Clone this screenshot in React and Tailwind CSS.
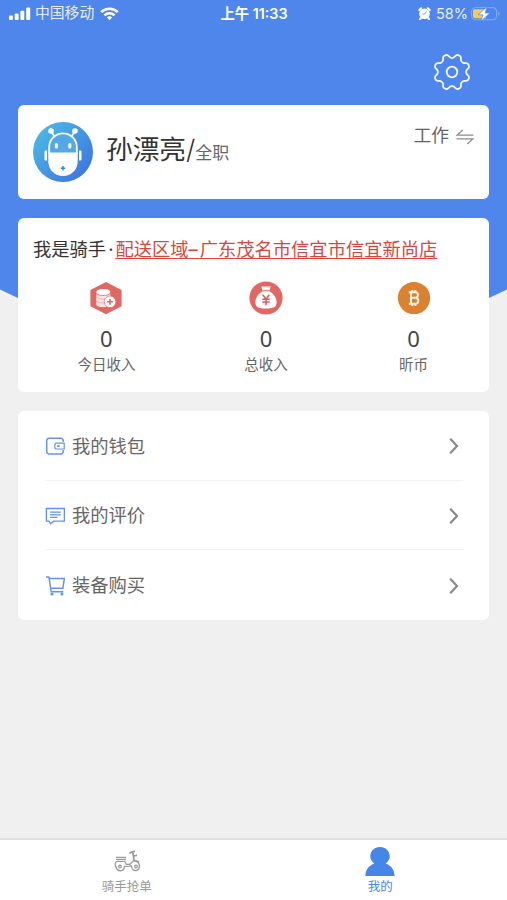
import React from 'react';

const Signal = () => (
  <svg className="w-[22px] h-[14px]" viewBox="0 0 22 14" fill="white">
    <rect x="0" y="8.6" width="3.9" height="4.4" rx="1" />
    <rect x="5.7" y="6.6" width="3.9" height="6.4" rx="1" />
    <rect x="11.4" y="3.8" width="3.9" height="9.2" rx="1" />
    <rect x="17.2" y="0.6" width="4" height="12.4" rx="1" />
  </svg>
);

const Wifi = () => (
  <svg className="w-[19px] h-[14px]" viewBox="0 0 19 14" fill="none" stroke="white" strokeWidth="2.5">
    <path d="M1.2 5.1a11.8 11.8 0 0 1 16.6 0" />
    <path d="M4.4 8.3a7.2 7.2 0 0 1 10.2 0" />
    <path d="M9.5 13.2 6.9 10.5a3.7 3.7 0 0 1 5.2 0z" fill="white" stroke="none" />
  </svg>
);

const Alarm = () => (
  <svg className="w-[13px] h-[13px]" viewBox="0 0 13 13" fill="none">
    <circle cx="6.5" cy="6.8" r="5.3" fill="white" />
    <path d="M1.3 3 3.2 1.3M11.7 3 9.8 1.3M2.8 11.2l-.8 1M10.2 11.2l.8 1" stroke="white" strokeWidth="2.1" strokeLinecap="round" />
    <path d="M8.5 4.6 6.6 7H4.6" stroke="#4f86ec" strokeWidth="0.8" />
  </svg>
);

const Battery = () => (
  <svg className="w-[30px] h-[16px]" viewBox="0 0 30 16" fill="none">
    <rect x="0.6" y="1.6" width="25" height="12.2" rx="3.6" stroke="#86adf3" strokeWidth="1" />
    <path d="M27.3 5.6c1.8.8 1.8 3.6 0 4.4z" fill="#86adf3" />
    <path d="M4 3.2h11v9H4a2 2 0 0 1-2-2v-5a2 2 0 0 1 2-2z" fill="#f5ce46" />
    <path d="M16.2.8 7 8.8h5l-2.200 6.4 9.200-8.200h-5z" fill="white" stroke="#4f86ec" strokeWidth="0.7" />
  </svg>
);

// Outline with eight rounded teeth
const gearPoints = Array.from({ length: 144 }, (_, i) => {
  const a = (i / 144) * Math.PI * 2;
  const r = 16.1 - (1.9 * Math.tanh(1.5 * Math.cos(8 * a))) / Math.tanh(1.5);
  return `${(19 + r * Math.cos(a)).toFixed(2)},${(19 + r * Math.sin(a)).toFixed(2)}`;
}).join(' ');

const Gear = () => (
  <svg className="w-[38px] h-[38px]" viewBox="0 0 38 38" fill="none" stroke="#f4f8ff" strokeWidth="1.8" strokeLinejoin="round">
    <polygon points={gearPoints} />
    <circle cx="19" cy="19" r="5.3" />
  </svg>
);

const Avatar = () => (
  <svg className="w-[60px] h-[60px]" viewBox="0 0 60 60">
    <defs>
      <linearGradient id="avatar" x1="0" y1="0.2" x2="0.85" y2="1">
        <stop offset="0" stopColor="#4bb9e6" />
        <stop offset="1" stopColor="#3e73de" />
      </linearGradient>
    </defs>
    <circle cx="30" cy="30" r="30" fill="url(#avatar)" />
    <g fill="none" stroke="white" strokeWidth="1.8">
      <path d="M18.3 9.5 21.7 14.8M41.7 9.5 38.3 14.8" />
      <path d="M16.2 32V25.2a13.8 13.8 0 0 1 27.6 0V32" fill="#55a8e6" />
    </g>
    <g fill="white">
      <circle cx="18" cy="9" r="2.8" />
      <circle cx="42" cy="9" r="2.8" />
      <rect x="21.9" y="21" width="3" height="5.6" rx="1.5" />
      <rect x="35.300" y="21" width="3" height="5.6" rx="1.5" />
      <path d="M15.3 30.6h29.4v8.8a14.7 14.7 0 0 1-29.4 0z" />
      <path d="M14 28.5v10h-1.3a1.2 1.2 0 0 1-1.2-1.2v-7.6a1.2 1.2 0 0 1 1.2-1.2zM46 28.5v10h1.3a1.2 1.2 0 0 0 1.2-1.2v-7.6a1.2 1.2 0 0 0-1.2-1.2z" />
    </g>
    <path d="M30 44v4.4M27.8 46.2h4.4" stroke="#3f82e0" strokeWidth="1.5" />
  </svg>
);

const Swap = () => (
  <svg className="w-[18px] h-[16px]" viewBox="0 0 18 16" fill="none" stroke="#8c8c8c" strokeWidth="1.2">
    <path d="M6.8 1 1 6.2h16.4M11.2 15 17 9.8H0.6" />
  </svg>
);

const Coins = () => (
  <svg className="w-[34px] h-[34px]" viewBox="0 0 34 34">
    <path d="M17 .9 32.6 9v16.2L17 33.3 1.4 25.2V9z" fill="#e16764" />
    <ellipse cx="14.3" cy="11" rx="7" ry="3.1" fill="white" />
    <path d="M7.3 12.5c1 3 13 3 14 0v11.2c-1 3.2-13 3.2-14 0z" fill="#fbe5e4" />
    <path d="M7.3 16.2c1 2.6 13 2.6 14 0M7.3 20c1 2.6 13 2.6 14 0" fill="none" stroke="#e89a98" strokeWidth="0.7" />
    <circle cx="21" cy="20.8" r="5.8" fill="white" stroke="#e16764" strokeWidth="0.7" />
    <path d="M21 17.9v5.8M18.1 20.8h5.8" stroke="#e16764" strokeWidth="1.6" />
  </svg>
);

const MoneyBag = () => (
  <svg className="w-[34px] h-[34px]" viewBox="0 0 34 34">
    <circle cx="17" cy="17" r="16.6" fill="#e16764" />
    <path d="M12.4 5.600h9.2l-.8 3.600h-7.6z" fill="white" />
    <path d="M13.6 10.3h6.8c5.3 3 7.5 7.7 7.2 11.5-.3 4.3-3 5.7-10.6 5.7S6.7 26.1 6.4 21.8c-.3-3.800 1.9-8.500 7.2-11.500z" fill="white" />
    <path d="M13.7 13.8 17 18l3.3-4.2M13.2 18.3h7.6M13.2 21h7.6M17 17.6v6.6" fill="none" stroke="#df5a58" strokeWidth="1.5" />
  </svg>
);

const Bitcoin = () => (
  <svg className="w-[34px] h-[34px]" viewBox="0 0 34 34">
    <circle cx="17" cy="17" r="16.1" fill="#db812f" />
    <path d="M11.800 11.2h6.4a2.700 2.700 0 0 1 0 5.5h-4.400 5a3.100 3.100 0 0 1 0 6.100h-7M14 11.200v11.600M15.300 9v2M18.400 9v2M15.300 22.800v2.200M18.400 22.800v2.200" fill="none" stroke="#fff4e6" strokeWidth="1.9" />
  </svg>
);

const Wallet = () => (
  <svg className="w-5 h-5" viewBox="0 0 20 20" fill="none" stroke="#6393ef" strokeWidth="1.5">
    <path d="M18.2 6V4.6a2.300 2.300 0 0 0-2.300-2.300H4A2.300 2.300 0 0 0 1.700 4.600v11A2.300 2.300 0 0 0 4 17.900h11.900a2.300 2.300 0 0 0 2.300-2.300V14" />
    <path d="M19.200 7.200h-7.600a1.800 1.800 0 0 0-1.800 1.800v2.200a1.800 1.800 0 0 0 1.800 1.800h7.600z" strokeWidth="1.2" />
    <path d="M12 10.100h2.600" strokeWidth="1.7" />
  </svg>
);

const Comment = () => (
  <svg className="w-5 h-5" viewBox="0 0 20 20" fill="none" stroke="#6393ef" strokeWidth="1.4">
    <path d="M1.400 2.500h18v12.600H8.900l-3.300 2.600-1.600-2.600H1.400z" />
    <path d="M5 6.200h10.800M5 8.800h10.800M5 11.400h7.400" strokeWidth="1.2" />
  </svg>
);

const Cart = () => (
  <svg className="w-5 h-5" viewBox="0 0 20 20" fill="none" stroke="#6393ef" strokeWidth="1.5">
    <path d="M1 .900h2.900l2.300 14.900h12.200M4.300 2.600h15.100l-1.600 9.600H5.600" />
    <rect x="5.600" y="16.700" width="2.700" height="2.700" fill="#6393ef" stroke="none" />
    <rect x="15.600" y="16.700" width="2.700" height="2.700" fill="#6393ef" stroke="none" />
  </svg>
);

const Scooter = () => (
  <svg className="w-[26px] h-[22px]" viewBox="0 0 26 22" fill="none" stroke="#9a9a9a" strokeWidth="1.3">
    <circle cx="6" cy="16.500" r="1.300" />
    <circle cx="22" cy="16.500" r="1.300" />
    <path d="M2.200 17.500C.6 15.500.8 11.600 3.400 11.300h7.400l1.400 3h3.600l3.600-3.400c3.400-.4 6.400 2 6 5.600-.4 4.600-5.600 5.400-7.200 2l-1-2.700-2.200.3-4.600.3c-.4 5.400-6.600 6-8.200 1.100z" />
    <path d="M2 7.300h10M2 9.400h10" />
    <path d="M15.400 3.500 18 1.900l3-.6M18.700 2l1.500 9M19.300 6l3.700-.700M20.500 10.600l4.600 1.300" strokeWidth="1.700" />
  </svg>
);

const Person = () => (
  <svg className="w-[30px] h-[30px]" viewBox="0 0 30 30">
    <path d="M15 .9c5.600 0 9.700 4.100 9.700 9.300 0 3-1.500 5.500-4 7.300 5.200 2 8.800 6 8.900 12.500H.4c.1-6.500 3.700-10.500 8.900-12.500-2.500-1.800-4-4.300-4-7.300C5.300 5 9.400.9 15 .9z" fill="#4686e7" />
  </svg>
);

const stats = [
  { icon: Coins, value: '0', label: '今日收入' },
  { icon: MoneyBag, value: '0', label: '总收入' },
  { icon: Bitcoin, value: '0', label: '昕币' },
];

const menu = [
  { icon: Wallet, label: '我的钱包' },
  { icon: Comment, label: '我的评价' },
  { icon: Cart, label: '装备购买' },
];

const App = () => {
  return (
    <div className="grid w-[507px] h-[900px] overflow-hidden bg-[#f0f0f0] font-['Inter','Noto_Sans_CJK_SC',sans-serif]">
      {/* Curved header background */}
      <svg className="col-start-1 row-start-1 w-[507px] h-[330px]" viewBox="0 0 507 330">
        <path d="M0 0h507v289.5L489 298Q253.5 355 18 298L0 289.5z" fill="#4f86ec" />
      </svg>

      <div className="col-start-1 row-start-1 flex flex-col h-[900px] min-w-0">
        {/* Status bar */}
        <div className="grid grid-cols-3 items-center h-[27px] pl-[9px] pr-[6px] text-white">
          <div className="flex items-center">
            <Signal />
            <span className="ml-[4px] mr-[6px] text-[14.8px] leading-[27px] whitespace-nowrap text-[#e6eefd]">中国移动</span>
            <Wifi />
          </div>
          <div className="pr-[2px] text-center text-[14.3px] leading-[27px] font-semibold">上午 11:33</div>
          <div className="flex items-center justify-end">
            <Alarm />
            <span className="ml-[5px] mr-[3px] text-[14.5px] leading-[27px] text-[#e6eefd]">58%</span>
            <Battery />
          </div>
        </div>

        <div className="flex justify-end h-[78px] pt-[26px] pr-[36px]">
          <Gear />
        </div>

        <div className="flex flex-col px-[18px]">
          {/* Profile */}
          <div className="flex h-[94px] px-[15px] rounded-md bg-white">
            <div className="pt-[17px]">
              <Avatar />
            </div>
            <div className="ml-[13px] pt-[24px] text-[26.7px] leading-[40px] text-[#333]">
              孙漂亮<span className="font-light">/</span><span className="text-[17px] text-[#666]">全职</span>
            </div>
            <div className="flex ml-auto pt-[19px] h-[44px] items-center gap-[7px] text-[17.8px] text-[#666]">
              工作
              <Swap />
            </div>
          </div>

          {/* Rider info */}
          <div className="mt-[19px] h-[174px] rounded-md bg-white">
            <div className="px-[15px] pt-[17px] text-[18.3px] leading-[28px] text-[#333] whitespace-nowrap">
              我是骑手<span className="pl-[2px] pr-[2px]">·</span>
              <span className="text-[#d9473c] underline underline-offset-2 decoration-1">
                配送区域<span className="tracking-[2px]">–</span>广东茂名市信宜市信宜新尚店
              </span>
            </div>
            <div className="flex justify-around pl-[5px] pr-1 pt-[18px]">
              {stats.map((item) => (
                <div key={item.label} className="flex flex-col items-center">
                  <item.icon />
                  <span className="mt-[9px] font-['Noto_Sans'] text-[22px] leading-[28px] text-[#444]">{item.value}</span>
                  <span className="mt-[2px] text-[14.5px] leading-[22px] text-[#666]">{item.label}</span>
                </div>
              ))}
            </div>
          </div>

          {/* Menu */}
          <div className="mt-[19px] h-[209px] pl-[27px] pr-[26px] rounded-md bg-white divide-y divide-[#f2f2f2]">
            {menu.map((item) => (
              <div key={item.label} className="flex items-center h-[69.5px] pt-[2px] text-[18.3px] text-[#666]">
                <item.icon />
                <span className="ml-[7px]">{item.label}</span>
                <svg className="ml-auto mr-[4px] w-[10px] h-[18px]" viewBox="0 0 10 18" fill="none" stroke="#888" strokeWidth="2.2">
                  <path d="M1.2 1.7 8 9l-6.800 7.300" />
                </svg>
              </div>
            ))}
          </div>
        </div>

        {/* Tab bar */}
        <div className="grid grid-cols-2 mt-auto h-[62px] border-t-2 border-[#dfdfdf] bg-white text-[12.5px] leading-[18px]">
          <div className="flex flex-col items-center pt-[10px] text-[#999]">
            <Scooter />
            <span className="mt-[6px]">骑手抢单</span>
          </div>
          <div className="flex flex-col items-center pt-[6px] text-[#4a86e8]">
            <Person />
            <span className="mt-[2px]">我的</span>
          </div>
        </div>
      </div>
    </div>
  );
};

export default App;
